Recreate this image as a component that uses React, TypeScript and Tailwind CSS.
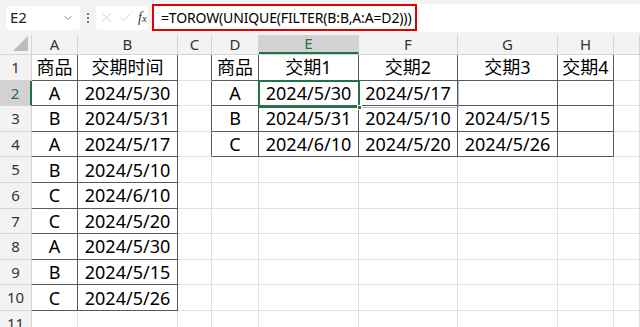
import { ChevronDown, X, Check } from 'lucide-react';

const COLS = [
  { key: 'A', w: 46 },
  { key: 'B', w: 100 },
  { key: 'C', w: 34 },
  { key: 'D', w: 47 },
  { key: 'E', w: 100 },
  { key: 'F', w: 99 },
  { key: 'G', w: 100 },
  { key: 'H', w: 56 },
  { key: 'I', w: 26 },
];

const DATA: Record<string, string> = {
  A1: '商品', B1: '交期时间',
  A2: 'A', B2: '2024/5/30',
  A3: 'B', B3: '2024/5/31',
  A4: 'A', B4: '2024/5/17',
  A5: 'B', B5: '2024/5/10',
  A6: 'C', B6: '2024/6/10',
  A7: 'C', B7: '2024/5/20',
  A8: 'A', B8: '2024/5/30',
  A9: 'B', B9: '2024/5/15',
  A10: 'C', B10: '2024/5/26',
  D1: '商品', E1: '交期1', F1: '交期2', G1: '交期3', H1: '交期4',
  D2: 'A', E2: '2024/5/30', F2: '2024/5/17',
  D3: 'B', E3: '2024/5/31', F3: '2024/5/10', G3: '2024/5/15',
  D4: 'C', E4: '2024/6/10', F4: '2024/5/20', G4: '2024/5/26',
};

const ROWS = [1, 2, 3, 4, 5, 6, 7, 8, 9, 10, 11];

const inTable = (c: number, r: number) =>
  (c >= 0 && c <= 1 && r >= 1 && r <= 10) || (c >= 3 && c <= 7 && r >= 1 && r <= 4);

const font = { fontFamily: '"Noto Sans", "Noto Sans CJK SC", sans-serif' };

function Cell({ ci, r, w }: { ci: number; r: number; w: number }) {
  const key = COLS[ci].key + r;
  const dark = inTable(ci, r) || inTable(ci + 1, r);
  const darkB = inTable(ci, r) || inTable(ci, r + 1);
  return (
    <div
      className={`h-[25.6px] flex items-center justify-center border-r border-b shrink-0 text-[18px] text-black leading-none ${
        dark ? 'border-r-[#595959]' : 'border-r-[#e1e1e1]'
      } ${darkB ? 'border-b-[#595959]' : 'border-b-[#e1e1e1]'}`}
      style={{ width: w }}
    >
      {DATA[key] ?? ''}
    </div>
  );
}

export default function App() {
  return (
    <div className="w-[640px] h-[327px] overflow-hidden bg-white relative" style={font}>
      {/* formula bar */}
      <div className="h-[35px] bg-[#f3f3f3] flex items-center">
        <div className="ml-[6px] w-[74px] h-[24px] bg-white rounded-[4px] flex items-center pl-[4px] pr-[6px] text-[15px] text-[#222]">
          <span className="flex-1">E2</span>
          <ChevronDown className="w-[12px] h-[12px] text-[#666]" strokeWidth={1.6} />
        </div>
        <div className="w-[16px] flex flex-col items-center gap-[2px]">
          <span className="w-[2px] h-[2px] bg-[#777]" />
          <span className="w-[2px] h-[2px] bg-[#777]" />
          <span className="w-[2px] h-[2px] bg-[#777]" />
        </div>
        <div className="w-[52px] h-[24px] bg-white rounded-[4px] flex items-center pl-[3px] gap-[2px]">
          <X className="w-[15px] h-[15px] text-[#c8c8c8]" strokeWidth={1.3} />
          <Check className="w-[15px] h-[15px] text-[#c8c8c8] ml-[2px]" strokeWidth={1.3} />
          <span className="ml-[3px] text-[14px] italic text-[#333]" style={{ fontFamily: '"Liberation Serif", serif' }}>
            f<span className="text-[11px]">x</span>
          </span>
        </div>
        <div className="ml-[4px] flex-1 h-[28px] bg-white flex items-center">
          <div className="w-[265px] h-[27px] border-2 border-[#e00000] flex items-center pl-[7px] text-[14px] tracking-[-0.15px] text-black whitespace-nowrap">
            =TOROW(UNIQUE(FILTER(B:B,A:A=D2)))
          </div>
        </div>
      </div>

      {/* column header */}
      <div className="h-[20px] flex bg-[#f3f3f3] border-b border-[#d4d4d4]">
        <div className="w-[32px] shrink-0 border-r border-[#d4d4d4] relative">
          <div
            className="absolute right-[3px] bottom-[3px] w-[15px] h-[15px] bg-[#bdbdbd]"
            style={{ clipPath: 'polygon(100% 0, 100% 100%, 0 100%)' }}
          />
        </div>
        {COLS.map((c) => (
          <div
            key={c.key}
            className={`shrink-0 flex items-center justify-center text-[15px] border-r border-[#d4d4d4] ${
              c.key === 'E'
                ? 'bg-[#d2d2d2] text-[#217346] border-b-2 border-b-[#217346]'
                : 'text-[#333]'
            }`}
            style={{ width: c.w }}
          >
            {c.key === 'I' ? '' : c.key}
          </div>
        ))}
      </div>

      {/* rows */}
      {ROWS.map((r) => (
        <div key={r} className="flex">
          <div
            className={`w-[32px] h-[25.6px] shrink-0 flex items-center justify-center text-[15px] border-b border-[#d4d4d4] ${
              r === 2
                ? 'bg-[#d2d2d2] text-[#217346] border-r-2 border-r-[#217346]'
                : 'bg-[#f3f3f3] text-[#333] border-r border-r-[#d4d4d4]'
            }`}
          >
            {r}
          </div>
          {COLS.map((c, ci) => (
            <Cell key={c.key} ci={ci} r={r} w={c.w} />
          ))}
        </div>
      ))}

      {/* spill range highlight F2 */}
      <div className="absolute left-[358px] top-[80.6px] w-[101px] h-[27px] border-r border-b border-[#a8bde8] pointer-events-none" />
      {/* active cell E2 */}
      <div className="absolute left-[258px] top-[80px] w-[102px] h-[28px] border-2 border-[#217346] pointer-events-none">
        <div className="absolute -right-[4px] -bottom-[4px] w-[5px] h-[5px] bg-[#217346] border border-white" />
      </div>
    </div>
  );
}
